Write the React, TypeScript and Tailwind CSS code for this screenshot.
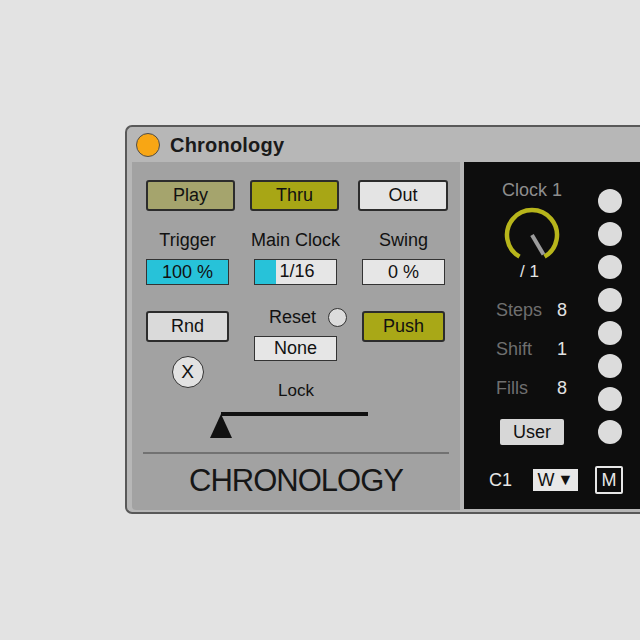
import React from 'react';

const btn = 'flex items-center justify-center border-2 border-[#2c2c2c] rounded-[3px] text-[18px] text-[#111]';
const box = 'flex items-center justify-center border-[1.5px] border-[#333] text-[18px] text-[#111]';

const Knob: React.FC = () => (
 <svg width="58" height="58" viewBox="0 0 58 58" className="ml-[39px] mt-[5px]">
 <path d="M16.5 50.65 A25 25 0 1 1 41.5 50.65" fill="none" stroke="#b7b51b" strokeWidth="4.5" />
 <line x1="29" y1="29" x2="40.5" y2="48.5" stroke="#9c9c9c" strokeWidth="4" />
 </svg>
);

const StatRow: React.FC<{ label: string; value: string; first?: boolean }> = ({ label, value, first }) => (
 <div className={`flex h-[22px] leading-[22px] text-[18px] ${first ? 'mt-[19px]' : 'mt-[17px]'}`}>
 <span className="ml-[32px] w-[61px] text-[#6f6f6f]">{label}</span>
 <span className="text-[#e2e2e2]">{value}</span>
 </div>
);

export default function App() {
 return (
 <div className="w-[640px] h-[640px] overflow-hidden bg-[#e3e3e3] pt-[125px] pl-[125px] font-['Liberation_Sans',Arial,sans-serif]">
 <div className="w-[560px] h-[389px] border-2 border-r-0 border-[#595959] rounded-l-[7px] bg-[#b7b7b7] flex flex-col">
 {/* Title bar */}
 <div className="h-[35px] flex items-center pl-[9px]">
 <div className="w-[24px] h-[24px] rounded-full bg-[#f8a614] border-[1.5px] border-[#4d4d4d]" />
 <span className="ml-[10px] text-[20px] font-bold text-[#1a1a1a] tracking-[0.2px]">Chronology</span>
 </div>

 <div className="flex pl-[5px]">
 {/* Left panel */}
 <div className="w-[328px] h-[348px] bg-[#a2a2a2] rounded-bl-[4px] flex flex-col">
 <div className="mt-[18px] flex pl-[14px]">
 <div className={`${btn} w-[89px] h-[31px] bg-[#a5a46d]`}>Play</div>
 <div className={`${btn} w-[89px] h-[31px] bg-[#a8a615] ml-[15px]`}>Thru</div>
 <div className={`${btn} w-[90px] h-[31px] bg-[#e4e4e4] ml-[19px]`}>Out</div>
 </div>

 <div className="mt-[18px] grid grid-cols-[83px_83px_83px] gap-x-[25px] pl-[14px] h-[22px] leading-[22px] text-[18px] text-[#111] text-center">
 <span>Trigger</span>
 <span className="whitespace-nowrap -mx-[6px]">Main Clock</span>
 <span>Swing</span>
 </div>

 <div className="mt-[8px] grid grid-cols-[83px_83px_83px] gap-x-[25px] pl-[14px]">
 <div className={`${box} h-[26px] bg-[#27c2d9]`}>100 %</div>
 <div className="h-[26px] border-[1.5px] border-[#333] bg-[#e6e6e6] flex">
 <div className="w-[21px] bg-[#27c2d9]" />
 <span className="flex-1 text-center text-[18px] leading-[23px] text-[#111] -ml-[21px] pl-[3px]">1/16</span>
 </div>
 <div className={`${box} h-[26px] bg-[#e6e6e6]`}>0 %</div>
 </div>

 <div className="mt-[26px] grid grid-cols-[83px_83px_83px] gap-x-[25px] pl-[14px] items-start">
 <div className="flex flex-col items-center">
 <div className={`${btn} w-[83px] h-[31px] bg-[#dadada]`}>Rnd</div>
 <div className="mt-[14px] w-[32px] h-[32px] rounded-full border-[1.5px] border-[#333] bg-[#e2e2e2] flex items-center justify-center text-[19px] text-[#111]">X</div>
 </div>
 <div className="flex flex-col">
 <div className="-mt-[4px] h-[20px] w-[94px] flex items-center text-[18px] text-[#111]">
 <span className="ml-[15px]">Reset</span>
 <div className="ml-[12px] w-[19px] h-[19px] rounded-full border-[1.5px] border-[#333] bg-[#dcdcdc]" />
 </div>
 <div className={`${box} mt-[9px] h-[25px] bg-[#e6e6e6]`}>None</div>
 </div>
 <div className={`${btn} w-[83px] h-[31px] bg-[#a9a817]`}>Push</div>
 </div>

 <div className="-mt-[7px] h-[20px] leading-[20px] text-center text-[17px] text-[#111]">Lock</div>
 <svg width="160" height="28" viewBox="0 0 160 28" className="mt-[11px] ml-[78px]">
 <rect x="11" y="0" width="147" height="4" fill="#111" />
 <polygon points="11,2 0,26 22,26" fill="#111" />
 </svg>

 <div className="mt-[12px] mx-[11px] h-[2px] bg-[#727272]" />
 <div className="mt-[11px] h-[32px] leading-[32px] text-center text-[31px] tracking-[-1px] text-[#161616]">CHRONOLOGY</div>
 </div>

 {/* Dark panel */}
 <div className="ml-[4px] w-[210px] h-[347px] bg-[#0d0d0d] flex flex-col">
 <div className="flex">
 <div className="w-[128px] flex flex-col">
 <div className="mt-[17px] ml-[38px] h-[22px] leading-[22px] text-[18px] text-[#8d8d8d]">Clock 1</div>
 <Knob />
 <div className="ml-[56px] h-[16px] leading-[16px] text-[17px] text-[#e4e4e4]">/ 1</div>
 <StatRow label="Steps" value="8" first />
 <StatRow label="Shift" value="1" />
 <StatRow label="Fills" value="8" />
 <div className="mt-[20px] ml-[36px] w-[64px] h-[26px] rounded-[2px] bg-[#d7d7d7] flex items-center justify-center text-[18px] text-[#111]">User</div>
 </div>
 <div className="ml-[6px] pt-[27px] flex flex-col gap-[9px]">
 {Array.from({ length: 8 }).map((_, i) => (
 <div key={i} className="w-[24px] h-[24px] rounded-full bg-[#dcdcdc]" />
 ))}
 </div>
 </div>

 <div className="mt-[21px] h-[28px] flex items-center">
 <span className="ml-[25px] text-[18px] text-[#e6e6e6]">C1</span>
 <div className="ml-[21px] w-[45px] h-[22px] bg-[#e8e8e8] flex items-center justify-center gap-[3px] text-[18px] text-[#111]">
 <span>W</span>
 <span className="text-[16px] leading-none">▼</span>
 </div>
 <div className="ml-[17px] w-[28px] h-[28px] border-2 border-[#e6e6e6] rounded-[2px] flex items-center justify-center text-[18px] text-[#e6e6e6]">M</div>
 </div>
 </div>
 </div>
 </div>
 </div>
 );
}
